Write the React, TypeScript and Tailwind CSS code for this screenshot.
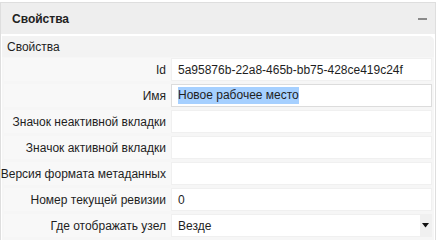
const rows: { label: string; value: string; kind?: "selected" | "select" }[] = [
  { label: "Id", value: "5a95876b-22a8-465b-bb75-428ce419c24f" },
  { label: "Имя", value: "Новое рабочее место", kind: "selected" },
  { label: "Значок неактивной вкладки", value: "" },
  { label: "Значок активной вкладки", value: "" },
  { label: "Версия формата метаданных", value: "" },
  { label: "Номер текущей ревизии", value: "0" },
  { label: "Где отображать узел", value: "Везде", kind: "select" },
];

export default function App() {
  return (
    <div
      className="w-[439px] h-[240px] bg-white overflow-hidden pt-[2px] text-[12px] text-[#1e1e1e] whitespace-nowrap"
      style={{ fontFamily: '"Liberation Sans", Arial, sans-serif' }}
    >
      <div className="w-[436px] h-[240px] border border-[#dedede] border-b-0 flex flex-col">
        {/* Panel header */}
        <div className="h-[31px] bg-[#eeeeee] flex items-center justify-between pl-[11px] pr-[8px] shrink-0">
          <span className="font-bold text-[#222]">Свойства</span>
          <div className="w-[9px] h-[2px] bg-[#8a8a8a]" />
        </div>

        <div className="flex-1 pt-[2px] px-[1px] flex flex-col">
          {/* Section header */}
          <div className="h-[21px] bg-[#f3f3f3] rounded-tr-[5px] flex items-center pl-[5px] shrink-0">
            <span>Свойства</span>
          </div>

          {/* Property rows */}
          <div className="flex flex-col gap-[3px] bg-[#f6f6f6] pt-[1px] pb-[6px] pl-[2px] pr-[2px]">
            {rows.map((r) => (
              <div key={r.label} className="flex h-[23px]">
                <div className="w-[167px] shrink-0 flex items-center justify-end pr-[5px] bg-[#f8f8f8]">
                  {r.label}
                </div>
                <div
                  className={
                    "flex-1 flex items-center bg-white pl-[6px] border " +
                    (r.kind === "selected" ? "border-[#dcdcdc]" : "border-[#f0f0f0]")
                  }
                >
                  {r.kind === "selected" ? (
                    <span className="bg-[#a6d0ff] leading-[17px]">{r.value}</span>
                  ) : (
                    <span className="flex-1">{r.value}</span>
                  )}
                  {r.kind === "select" && (
                    <div className="w-[11px] h-full bg-[#f0f0f0] flex items-center justify-center">
                      <svg width="7" height="5" viewBox="0 0 7 5">
                        <path d="M0 0h7L3.5 4.5z" fill="#111" />
                      </svg>
                    </div>
                  )}
                </div>
              </div>
            ))}
          </div>
        </div>
      </div>
    </div>
  );
}
